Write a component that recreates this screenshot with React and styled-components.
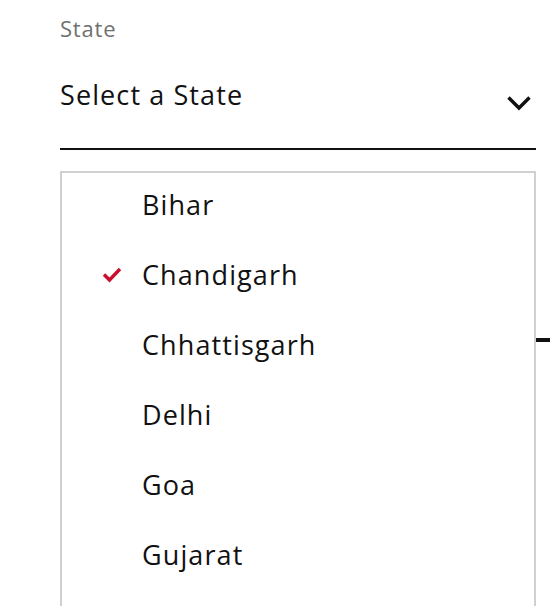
import React from "react";
import styled, { createGlobalStyle } from "styled-components";

const GlobalStyle = createGlobalStyle`
  html, body {
    margin: 0;
    padding: 0;
    background: #fff;
    overflow: hidden;
  }
  body {
    font-family: "Open Sans", "Noto Sans", sans-serif;
    font-variant-ligatures: none;
    color: #111;
  }
`;

const Page = styled.div`
  position: relative;
  width: 550px;
  height: 606px;
  overflow: hidden;
`;

const Field = styled.div`
  padding: 14px 14px 0 60px;
  display: flex;
  flex-direction: column;
`;

const Label = styled.div`
  font-size: 22px;
  line-height: 28px;
  letter-spacing: 0.8px;
  color: #707070;
`;

const SelectBox = styled.div`
  width: 476px;
  height: 108px;
  box-sizing: border-box;
  border-bottom: 2px solid #111;
  display: flex;
  align-items: center;
  justify-content: space-between;
  padding-right: 4px;
`;

const Value = styled.span`
  font-size: 27px;
  letter-spacing: 1.1px;
  margin-top: -2px;
`;

const Chevron = styled.svg`
  width: 26px;
  height: 16px;
  margin-top: 16px;
`;

const NextLine = styled.div`
  margin-top: 188px;
  margin-left: 60px;
  height: 4px;
  background: #111;
`;

const Menu = styled.ul`
  position: absolute;
  top: 171px;
  left: 60px;
  width: 476px;
  height: 460px;
  box-sizing: border-box;
  margin: 0;
  padding: 0;
  list-style: none;
  background: #fff;
  border: 2px solid #d0d0d0;
  overflow: hidden;
`;

const Option = styled.li`
  height: 70px;
  display: flex;
  align-items: center;
  font-size: 27px;
  letter-spacing: 1.1px;
  color: #111;
  padding-left: 40px;
  margin-top: ${({ first }) => (first ? "-4px" : "0")};
`;

const CheckSlot = styled.span`
  width: 40px;
  display: flex;
  align-items: center;
`;

const states = ["Bihar", "Chandigarh", "Chhattisgarh", "Delhi", "Goa", "Gujarat"];

const Check = () => (
  <svg width="20" height="17" viewBox="0 0 20 17">
    <path
      d="M2 8.5 L7.5 14 L18 3"
      fill="none"
      stroke="#c8102e"
      strokeWidth="3.4"
    />
  </svg>
);

export default function App() {
  const selected = "Chandigarh";
  return (
    <Page>
      <GlobalStyle />
      <Field>
        <Label>State</Label>
        <SelectBox>
          <Value>Select a State</Value>
          <Chevron viewBox="0 0 26 16">
            <path
              d="M2.5 2.5 L13 13 L23.5 2.5"
              fill="none"
              stroke="#111"
              strokeWidth="3.4"
            />
          </Chevron>
        </SelectBox>
      </Field>
      <NextLine />
      <Menu>
        {states.map((s, i) => (
          <Option key={s} first={i === 0}>
            <CheckSlot>{s === selected && <Check />}</CheckSlot>
            {s}
          </Option>
        ))}
      </Menu>
    </Page>
  );
}
